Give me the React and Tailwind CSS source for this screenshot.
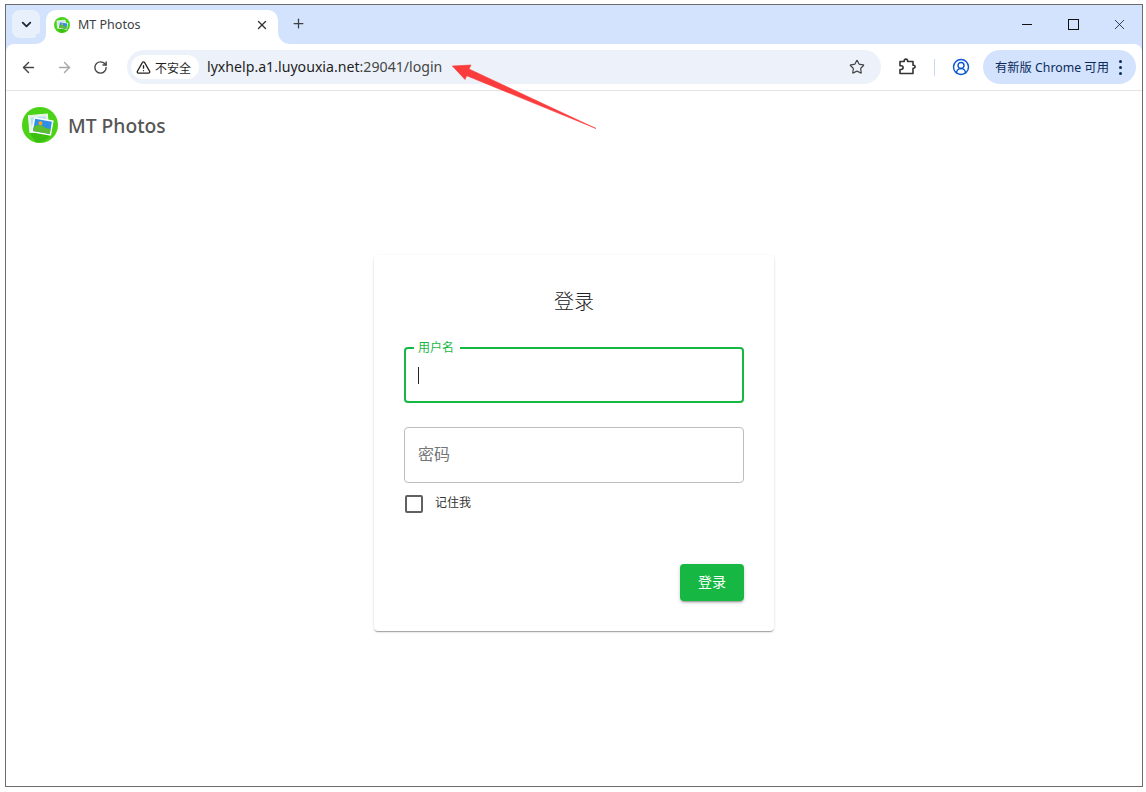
import React from "react";
import { ArrowLeft, ArrowRight, RotateCw, Star, X, Plus, ChevronDown, TriangleAlert, CircleUserRound } from "lucide-react";

const FONT = "font-['Noto_Sans','Noto_Sans_CJK_SC',sans-serif]";

function Logo({ className }) {
  return (
    <svg viewBox="0 0 36 36" className={className}>
      <circle cx="18" cy="18" r="18" fill="#4bd317" />
      <path d="M8 14 L29 28 A18 18 0 0 1 14 35.6 L7 25 Z" fill="#3cbf11" />
      <g transform="rotate(-5 14 15)">
        <rect x="7" y="8" width="19" height="17" fill="#e6f3ea" stroke="#f4f7f2" />
        <rect x="9" y="10" width="15" height="8" fill="#b9dff0" />
      </g>
      <g transform="rotate(10 20 19)">
        <rect x="10.5" y="11.5" width="20" height="15.5" fill="#ffffff" />
        <rect x="12" y="13" width="17" height="12.5" fill="#2f8fe6" />
        <path d="M12 25.5 L12 21 Q18 16.5 23 20 Q26 21 29 20 L29 25.5 Z" fill="#5bbd2f" />
        <circle cx="18" cy="16.5" r="2" fill="#f6a623" />
      </g>
    </svg>
  );
}

function Puzzle() {
  return (
    <svg viewBox="0 0 18 18" className="w-[18px] h-[18px]" fill="none" stroke="#333" strokeWidth="1.6" strokeLinejoin="round">
      <path d="M2 3.5 H6.2 V2.8 A1.7 1.7 0 0 1 9.6 2.8 V3.5 H15 V7.2 H15.6 A1.5 1.5 0 0 1 15.6 10.2 H15 V15.5 H2 V11.5 H3.2 A1.9 1.9 0 0 0 3.2 7.7 H2 Z" />
    </svg>
  );
}

function Field({ label, active }) {
  if (active) {
    return (
      <div className="relative h-14 rounded border-2 border-[#16b843]">
        <span className="absolute left-[8px] -top-[9px] bg-white pl-[4px] pr-[6px] text-[12px] leading-[16px] text-[#16b843]">{label}</span>
        <span className="absolute left-[12px] top-[18px] w-px h-[17px] bg-[#222]" />
      </div>
    );
  }
  return (
    <div className="h-14 rounded border border-[#bdbdbd] flex items-center pl-[13px] pb-[2px]">
      <span className="text-[16px] text-[#757575]">{label}</span>
    </div>
  );
}

export default function App() {
  return (
    <div className={`relative w-[1146px] h-[792px] bg-white pt-1 pl-[5px] overflow-hidden ${FONT}`}>
      <div className="w-[1138px] h-[783px] border border-[#6b6b6b] bg-[#d3e3fd] flex flex-col overflow-hidden">
        {/* tab strip */}
        <div className="h-[39px] shrink-0 flex items-end">
          <div className="ml-[6px] mb-[6px] w-7 h-7 rounded-lg bg-[#e8f0fc] flex items-center justify-center">
            <ChevronDown size={15} strokeWidth={3} color="#1f2937" />
          </div>
          <div className="relative ml-[6px] w-[232px] h-[34px] bg-white rounded-t-[10px] flex items-center pl-2 pr-[9px] pb-[4px]">
            <span className="absolute -left-[10px] bottom-0 w-[10px] h-[10px] bg-white">
              <span className="block w-full h-full bg-[#d3e3fd] rounded-br-[10px]" />
            </span>
            <span className="absolute -right-[12px] bottom-0 w-3 h-3 bg-white">
              <span className="block w-full h-full bg-[#d3e3fd] rounded-bl-[12px]" />
            </span>
            <Logo className="w-4 h-4 shrink-0" />
            <span className="ml-2 text-[12.5px] text-[#3c4043] flex-1">MT Photos</span>
            <X size={14} strokeWidth={2.4} color="#333" />
          </div>
          <div className="ml-[12px] mb-[13px] w-4 h-4 flex items-center justify-center">
            <Plus size={15} strokeWidth={2} color="#3c4043" />
          </div>
          <div className="ml-auto self-start mt-[12px] h-[14px] flex items-center">
            <div className="w-[46px] flex justify-center"><span className="block w-[10px] h-px bg-[#111]" /></div>
            <div className="w-[46px] flex justify-center"><span className="block w-[11px] h-[11px] border border-[#111]" /></div>
            <div className="w-[46px] flex justify-center"><X size={17} strokeWidth={1.1} color="#111" /></div>
          </div>
        </div>

        {/* toolbar */}
        <div className="relative h-[47px] shrink-0 bg-white rounded-t-[8px] border-b border-[#e3e3e3] flex items-center pl-[14px] pr-[5px]">
          <ArrowLeft size={17} strokeWidth={2} color="#444746" />
          <ArrowRight size={17} strokeWidth={2} color="#a8a8a8" className="ml-[19px]" />
          <RotateCw size={15} strokeWidth={2.2} color="#444746" className="ml-[20px]" />
          <div className="ml-[19px] w-[754px] h-[34px] rounded-full bg-[#edf2fa] flex items-center pl-1 pr-[16px] shrink-0">
            <div className="h-6 w-[68px] rounded-full bg-white flex items-center pl-[5px] shrink-0">
              <TriangleAlert size={15} strokeWidth={2.2} color="#222" />
              <span className="ml-[4px] mt-[3px] text-[12px] text-[#1f1f1f]">不安全</span>
            </div>
            <span className="ml-2 text-[14.15px] text-[#1f1f1f] whitespace-nowrap">
              lyxhelp.a1.luyouxia.net<span className="text-[#444746]">:29041/login</span>
            </span>
            <Star size={16} strokeWidth={1.8} color="#444746" className="ml-auto" />
          </div>
          <div className="ml-[17px]"><Puzzle /></div>
          <div className="ml-[18px] w-px h-[17px] bg-[#c7d8f2]" />
          <CircleUserRound size={18} strokeWidth={1.9} color="#0b57d0" className="ml-[17px]" />
          <div className="ml-[13px] w-[153px] h-[34px] rounded-full bg-[#d3e3fd] flex items-center pl-3 shrink-0">
            <span className="mt-[2px] text-[12.3px] text-[#0a2a5c] whitespace-nowrap">有新版 Chrome 可用</span>
            <span className="ml-[10px] flex flex-col gap-[3px]">
              <span className="block w-[3px] h-[3px] rounded-full bg-[#0a2a5c]" />
              <span className="block w-[3px] h-[3px] rounded-full bg-[#0a2a5c]" />
              <span className="block w-[3px] h-[3px] rounded-full bg-[#0a2a5c]" />
            </span>
          </div>
        </div>

        {/* page */}
        <div className="flex-1 bg-white">
          <div className="flex items-center pl-4 pt-4">
            <Logo className="w-9 h-9 shrink-0" />
            <span className="ml-[10px] mt-[2px] text-[19.3px] font-medium text-[#555]">MT Photos</span>
          </div>
          <div className="mt-[112px] ml-[368px] w-[400px] h-[376px] rounded bg-white shadow-[0_2px_1px_-1px_rgba(0,0,0,0.2),0_1px_1px_0_rgba(0,0,0,0.14),0_1px_3px_0_rgba(0,0,0,0.12)] px-[30px] flex flex-col">
            <div className="mt-[33px] h-7 text-center text-[20px] leading-7 font-light text-[#222]">登录</div>
            <div className="mt-[31px]"><Field label="用户名" active /></div>
            <div className="mt-6"><Field label="密码" /></div>
            <div className="mt-3 flex items-center pl-px">
              <span className="w-[18px] h-[18px] rounded-[2px] border-2 border-[#616161]" />
              <span className="ml-3 mb-[2px] text-[12px] leading-4 text-[#333]">记住我</span>
            </div>
            <div className="mt-[51px] flex justify-end">
              <div className="w-16 h-[37px] rounded bg-[#16b843] shadow-[0_3px_1px_-2px_rgba(0,0,0,0.2),0_2px_2px_0_rgba(0,0,0,0.14),0_1px_5px_0_rgba(0,0,0,0.12)] flex items-center justify-center pb-[2px] text-[14px] text-white">登录</div>
            </div>
          </div>
        </div>
      </div>

      {/* annotation arrow */}
      <svg className="absolute left-0 top-0 pointer-events-none" width="1146" height="792">
        <polygon points="452.3,66 471,65 469,69 596,128.5 466.7,75.7 465,79.5" fill="#fa3c3c" stroke="#fa3c3c" strokeWidth="0.6" strokeLinejoin="round" />
      </svg>
    </div>
  );
}
